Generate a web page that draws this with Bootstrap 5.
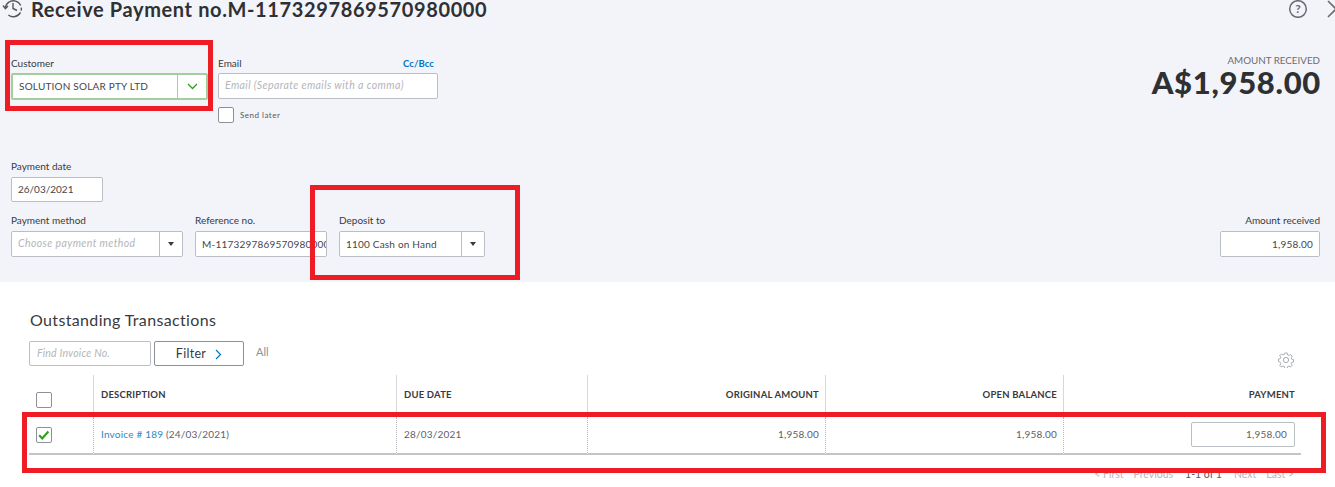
<!DOCTYPE html>
<html lang="en"><head><meta charset="utf-8"><title>Receive Payment</title>
<link href="https://cdn.jsdelivr.net/npm/bootstrap@5.3.0/dist/css/bootstrap.min.css" rel="stylesheet">
<style>
html,body{height:487px;overflow:hidden;background:#fff}
body{font-family:Lato,"Open Sans",sans-serif;color:#393a3d;font-size:10px;position:relative;width:1335px}
.top-zone{background:#f3f4f9;height:282px;padding:0 15px 0 11px;position:relative}
.head-row{height:18px;align-items:center}
.title-txt{font-size:20px;font-weight:700;margin:0 0 0 7px;letter-spacing:.62px;line-height:18px;color:#2f3033;white-space:nowrap}
.head-ico{margin-left:-9px;flex:none}
.help-ico{margin-left:auto;margin-right:19px}
.close-ico{margin-right:-25px}
.fld-lbl{font-size:10px;line-height:12px;display:block;color:#393a3d;margin-bottom:4px;height:12px}
.fake-in{height:26px;background:#fff;border:1px solid #babec5;border-radius:2px;font-size:10px;display:flex;align-items:center;padding:0 6px;white-space:nowrap;overflow:hidden;letter-spacing:.2px;color:#44464a}
.ph{color:#b3b5ba;font-style:italic;font-size:10.5px;letter-spacing:.4px}
.combo{padding:0;overflow:hidden}
.combo-txt{flex:1;padding:0 6px;overflow:hidden;white-space:nowrap}
.combo-btn{width:23px;height:100%;border-left:1px solid #babec5;display:flex;align-items:center;justify-content:center;flex:none}
.caret-dn{width:0;height:0;border-left:3.5px solid transparent;border-right:3.5px solid transparent;border-top:4px solid #393a3d}
.row-one{margin-top:39px;gap:10px}
.cust-w{width:197px}
.cust-in{height:27px;border:2px solid #a3cf9f}
.cust-in .combo-btn{width:29px;border-left-color:#babec5}
.mail-w{width:220px}
.mail-lbl{display:flex;justify-content:space-between;padding-right:4px}
.cc-link{color:#0077c5;text-decoration:none;font-weight:700;font-size:9.5px;letter-spacing:.1px;line-height:14px}
.send-row{margin-top:8px;gap:6px;font-size:8px;align-items:center;height:16px;letter-spacing:.5px;color:#55575c}
.box-chk{width:16px;height:16px;border:1px solid #8d9096;border-radius:2px;background:#fff;display:block;flex:none}
.amt-side{margin-left:auto;text-align:right;margin-top:-3px;margin-right:0}
.amt-cap{font-size:9.8px;line-height:12px;color:#6b6c72}
.amt-val{font-size:31px;font-weight:900;line-height:32px;color:#2f3033;letter-spacing:.7px;margin-right:-1px}
.date-blk{margin-top:37px;width:92px}
.date-blk .fld-lbl,.pay-row .fld-lbl{margin-bottom:5px}
.date-blk .fake-in{height:25px;letter-spacing:0}
.pay-row{margin-top:12px;gap:12px}
.w-method{width:172px}.w-ref{width:132px}.w-dep{width:146px}
.amt-in-w{margin-left:auto;width:100px;text-align:right}
.amt-in{justify-content:flex-end}
.low-zone{padding:28px 34px 0 29px}
.out-title{font-size:16px;font-weight:400;line-height:20px;margin:0 0 0 1px;color:#393a3d;letter-spacing:.35px}
.tool-row{margin-top:11px;gap:3px;position:relative;height:34px}
.find-in{width:122px;height:25px;border:1px solid #babec5;border-radius:2px;font-size:10.5px;display:flex;align-items:center;padding:0 7px;font-style:italic;color:#b3b5ba;letter-spacing:.2px}
.filter-btn{width:90px;height:25px;border:1px solid #8d9096;border-radius:2px;background:#fff;font-size:12.5px;display:flex;align-items:center;justify-content:center;gap:9px;padding:1px 0 0;color:#393a3d;letter-spacing:.3px}
.all-txt{font-size:11px;color:#8d9096;margin-left:9px;line-height:22px}
.gear-ico{margin-left:auto;margin-top:11px;margin-right:7px}
.tx-grid{display:grid;grid-template-columns:64px 303px 191px 238px 238px 238px}
.tx-h{height:42px;border-left:1px solid #d4d7dc;font-size:9.5px;font-weight:700;display:flex;align-items:center;padding:0 6px 2px 7px;letter-spacing:.2px;color:#393a3d}
.tx-c{height:38px;border-left:1px dotted #b5b8bd;font-size:10px;display:flex;align-items:center;padding:0 6px 1px 7px;color:#5f6167;letter-spacing:.2px;border-bottom:2px solid #c4c4c4}
.no-bl{border-left:0;padding-left:7px}
.h-box{margin-top:10px}
.txt-end{justify-content:flex-end}
.inv-link{color:#2d87c5;text-decoration:none}
.pay-in{width:104px;height:25px;justify-content:flex-end;border-radius:2px;color:#5f6167;padding:0 7px}
.pager{display:flex;justify-content:flex-end;gap:10px;font-size:10.5px;color:#b6b8bc;margin-top:12px;padding-right:7px;line-height:14px}
.pager b{font-weight:400;color:#55575c;margin:0 2px}
.red-box{position:absolute;border:5px solid #ee1c25;pointer-events:none}
.rb1{left:5px;top:40px;width:208px;height:71px}
.rb2{left:310px;top:185px;width:210px;height:95px}
.rb3{left:22px;top:412px;width:1304px;height:61px}
</style></head><body>
<div class="top-zone">
 <div class="d-flex head-row">
  <svg class="head-ico" width="22" height="18" viewBox="0 0 22 18" fill="none" stroke="#55575c" stroke-width="1.4"><path d="M3.4 8a8 8 0 1 1 3 7" stroke-dasharray="21 2 3 2"/><path d="M1 5.5 3.4 8.6 6 6"/><path d="M11 3v5.5l4 2"/></svg>
  <h1 class="title-txt">Receive Payment no.M-1173297869570980000</h1>
  <svg class="help-ico" width="20" height="18" viewBox="0 0 20 18" fill="none"><circle cx="10" cy="9" r="8.3" stroke="#6b6c72" stroke-width="1.5"/><text x="10" y="13" text-anchor="middle" font-family="Lato" font-size="12" font-weight="700" fill="#6b6c72">?</text></svg>
  <svg class="close-ico" width="18" height="18" viewBox="0 0 18 18" fill="none" stroke="#6b6c72" stroke-width="1.6"><path d="M1 1 17 17M17 1 1 17"/></svg>
 </div>
 <div class="d-flex row-one">
  <div class="cust-w"><label class="fld-lbl">Customer</label>
   <div class="fake-in combo cust-in"><span class="combo-txt">SOLUTION SOLAR PTY LTD</span><span class="combo-btn"><svg width="11" height="7" viewBox="0 0 11 7" fill="none" stroke="#2ca01c" stroke-width="1.3"><path d="M1 1l4.5 4.5L10 1"/></svg></span></div></div>
  <div class="mail-w"><label class="fld-lbl mail-lbl"><span>Email</span><a class="cc-link" href="#">Cc/Bcc</a></label>
   <div class="fake-in ph">Email (Separate emails with a comma)</div>
   <div class="d-flex send-row"><span class="box-chk"></span><span>Send later</span></div></div>
  <div class="amt-side"><div class="amt-cap">AMOUNT RECEIVED</div><div class="amt-val">A$1,958.00</div></div>
 </div>
 <div class="date-blk"><label class="fld-lbl">Payment date</label><div class="fake-in">26/03/2021</div></div>
 <div class="d-flex pay-row">
  <div class="w-method"><label class="fld-lbl">Payment method</label><div class="fake-in combo"><span class="combo-txt ph">Choose payment method</span><span class="combo-btn"><span class="caret-dn"></span></span></div></div>
  <div class="w-ref"><label class="fld-lbl">Reference no.</label><div class="fake-in">M-1173297869570980000</div></div>
  <div class="w-dep"><label class="fld-lbl">Deposit to</label><div class="fake-in combo"><span class="combo-txt">1100 Cash on Hand</span><span class="combo-btn"><span class="caret-dn"></span></span></div></div>
  <div class="amt-in-w"><label class="fld-lbl">Amount received</label><div class="fake-in amt-in">1,958.00</div></div>
 </div>
</div>
<div class="low-zone">
 <h2 class="out-title">Outstanding Transactions</h2>
 <div class="d-flex tool-row">
  <div class="find-in">Find Invoice No.</div>
  <button class="filter-btn" type="button">Filter <svg width="7" height="11" viewBox="0 0 7 11" fill="none" stroke="#0077c5" stroke-width="1.2"><path d="M1 1l4.5 4.5L1 10"/></svg></button>
  <span class="all-txt">All</span>
  <svg class="gear-ico" width="16" height="16" viewBox="0 0 16 16" fill="none" stroke="#a8abb0" stroke-width="1"><circle cx="8" cy="8" r="2.6"/><path d="M6.8 1h2.4l.4 1.9 1.3.6 1.7-1 1.6 1.7-1 1.6.6 1.4 1.7.4v2.3l-1.7.4-.6 1.4 1 1.6-1.6 1.7-1.7-1-1.3.6-.4 1.9H6.8l-.4-1.9-1.3-.6-1.7 1-1.6-1.7 1-1.6-.6-1.4L.5 9.4V7.1l1.7-.4.6-1.4-1-1.6 1.6-1.7 1.7 1 1.3-.6z"/></svg>
 </div>
 <div class="tx-grid">
  <div class="tx-h no-bl"><span class="box-chk h-box"></span></div>
  <div class="tx-h">DESCRIPTION</div><div class="tx-h">DUE DATE</div>
  <div class="tx-h txt-end">ORIGINAL AMOUNT</div><div class="tx-h txt-end">OPEN BALANCE</div><div class="tx-h txt-end">PAYMENT</div>
  <div class="tx-c no-bl"><svg class="box-chk" viewBox="0 0 16 16" fill="none"><path d="M2.5 8.2 6 12 13 4" stroke="#2ca01c" stroke-width="2.4"/></svg></div>
  <div class="tx-c"><a class="inv-link" href="#">Invoice # 189</a>&nbsp;(24/03/2021)</div><div class="tx-c">28/03/2021</div>
  <div class="tx-c txt-end">1,958.00</div><div class="tx-c txt-end">1,958.00</div>
  <div class="tx-c txt-end"><div class="fake-in pay-in">1,958.00</div></div>
 </div>
 <div class="pager"><span>&lt; First</span><span>Previous</span><b>1-1 of 1</b><span>Next</span><span>Last &gt;</span></div>
</div>
<div class="red-box rb1"></div><div class="red-box rb2"></div><div class="red-box rb3"></div>
</body></html>
